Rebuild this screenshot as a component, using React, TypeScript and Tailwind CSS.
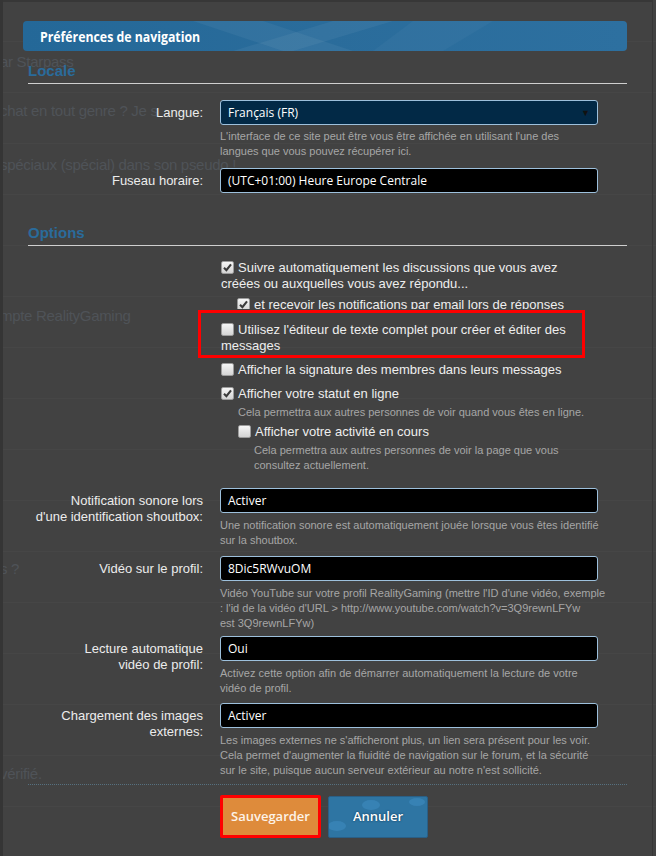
import React from "react";

const Box = ({ checked }: { checked?: boolean }) => (
  <span className="relative inline-block w-[13px] h-[13px] align-[-2px] mr-[4px] rounded-[2px] border border-[#9c9c9c] bg-gradient-to-b from-[#f6f6f6] to-[#d4d4d4]">
    {checked && (
      <svg viewBox="0 0 13 13" className="absolute left-[-1px] top-[-1px] w-[13px] h-[13px]">
        <path d="M3 6.8 L5.4 9.2 L10 3.4" fill="none" stroke="#3a3a3a" strokeWidth="2.1" />
      </svg>
    )}
  </span>
);

const Input = ({ value, select }: { value: string; select?: boolean }) => (
  <div
    className={`relative h-[25px] w-[378px] rounded-[3px] border border-[#9dc0dc] flex items-center pl-[7px] text-[12px] text-white ${
      select ? "bg-[#022946]" : "bg-black"
    }`}
    style={{ fontFamily: '"Open Sans", sans-serif' }}
  >
    {value}
    {select && <span className="absolute right-[7px] top-[5px] text-[9px] text-[#111]">▼</span>}
  </div>
);

const Expl = ({ children, className = "" }: { children: React.ReactNode; className?: string }) => (
  <div className={`text-[11px] leading-[15px] text-[#a6a6a6] ${className}`}>{children}</div>
);

const Row = ({
  label,
  value,
  select,
  expl,
  explMt = "mt-[5px]",
  className = "",
}: {
  label: React.ReactNode;
  value: string;
  select?: boolean;
  expl?: React.ReactNode;
  explMt?: string;
  className?: string;
}) => (
  <div className={`flex ${className}`}>
    <div className="w-[180px] text-right pt-[5px] text-[13px] leading-[16px] text-[#ececec] whitespace-nowrap">{label}</div>
    <div className="ml-[17px] w-[380px]">
      <Input value={value} select={select} />
      {expl && <Expl className={`${explMt} whitespace-nowrap`}>{expl}</Expl>}
    </div>
  </div>
);

export default function App() {
  const lines = [41, 92, 143, 194, 245, 296, 347, 398, 449, 500, 551, 602, 653, 704, 755, 806];
  return (
    <div
      className="relative w-[656px] h-[856px] overflow-hidden bg-[#424242]"
      style={{ fontFamily: '"Liberation Sans", Arial, sans-serif' }}
    >
      {/* page behind the dialog */}
      <div className="absolute inset-0 z-0 text-[15px] tracking-[-0.3px] text-[#4f5358]">
        {lines.map((y) => (
          <div key={y} className="absolute left-0 right-0 h-px bg-[#464646]" style={{ top: y }} />
        ))}
        <div className="absolute left-0 top-[51px] whitespace-nowrap">ar Starpass</div>
        <div className="absolute left-0 top-[100px] whitespace-nowrap">chat en tout genre ? Je s</div>
        <div className="absolute left-0 top-[154px] whitespace-nowrap">spéciaux (spécial) dans son pseudo !</div>
        <div className="absolute left-0 top-[305px] whitespace-nowrap">mpte RealityGaming</div>
        <div className="absolute left-0 top-[558px] whitespace-nowrap">s ?</div>
        <div className="absolute left-0 top-[763px] whitespace-nowrap">vérifié.</div>
      </div>

      {/* frame */}
      <div className="absolute left-0 top-0 bottom-0 w-[3px] bg-[#353535] z-10" />
      <div className="relative z-10 ml-[3px] w-[650px] h-[856px] border-t-2 border-r border-[#373737]">
        <div className="pt-[19px] pl-[20px]">
          {/* header */}
          <div className="relative h-[30px] w-[604px] rounded-[4px] overflow-hidden bg-gradient-to-r from-[#246898] via-[#2a6c9b] to-[#2d70a0] flex items-center pl-[17px]">
            <svg className="absolute inset-0" width="604" height="30" viewBox="0 0 604 30">
              <polygon points="170,0 240,0 330,30 260,30" fill="#ffffff" opacity="0.05" />
              <polygon points="310,0 370,0 270,30 210,30" fill="#ffffff" opacity="0.05" />
              <polygon points="390,0 470,0 420,30 350,30" fill="#ffffff" opacity="0.03" />
            </svg>
            <span
              className="relative inline-block origin-left scale-x-[0.82] text-[15px] font-bold text-white whitespace-nowrap"
              style={{ fontFamily: '"Open Sans", sans-serif' }}
            >
              Préférences de navigation
            </span>
          </div>

          {/* Locale */}
          <div className="mt-[11px] ml-[5px] w-[599px] pb-[3px] border-b border-[#cfcfcf] text-[15px] leading-[18px] font-bold text-[#2a6b9b]">
            Locale
          </div>

          <Row
            className="mt-[16px]"
            label="Langue:"
            value="Français (FR)"
            select
            explMt="mt-[4px]"
            expl={
              <>
                L'interface de ce site peut être vous être affichée en utilisant l'une des
                <br />
                langues que vous pouvez récupérer ici.
              </>
            }
          />
          <Row className="mt-[9px]" label="Fuseau horaire:" value="(UTC+01:00) Heure Europe Centrale" />

          {/* Options */}
          <div className="mt-[31px] ml-[5px] w-[599px] pb-[3px] border-b border-[#cfcfcf] text-[15px] leading-[18px] font-bold text-[#2a6b9b]">
            Options
          </div>

          <div className="mt-[14px] ml-[198px] w-[370px] text-[13px] leading-[16px] text-[#eeeeee]">
            <div>
              <Box checked />
              Suivre automatiquement les discussions que vous avez créées ou auxquelles vous avez répondu...
            </div>
            <div className="mt-[5px] ml-[16px] h-[12px] overflow-hidden whitespace-nowrap">
              <Box checked />
              et recevoir les notifications par email lors de réponses
            </div>
            <div className="mt-[1px] ml-[-23px] w-[387px] border-[3px] border-[#ff0000] pt-[9px] pl-[20px] pb-[1px]">
              <Box />
              Utilisez l'éditeur de texte complet pour créer et éditer des messages
            </div>
            <div className="mt-[4px] whitespace-nowrap">
              <Box />
              Afficher la signature des membres dans leurs messages
            </div>
            <div className="mt-[8px]">
              <Box checked />
              Afficher votre statut en ligne
            </div>
            <Expl className="mt-[3px] ml-[17px] whitespace-nowrap">
              Cela permettra aux autres personnes de voir quand vous êtes en ligne.
            </Expl>
            <div className="mt-[4px] ml-[17px]">
              <Box />
              Afficher votre activité en cours
            </div>
            <Expl className="mt-[3px] ml-[33px] w-[320px]">
              Cela permettra aux autres personnes de voir la page que vous consultez actuellement.
            </Expl>
          </div>

          <Row
            className="mt-[15px]"
            label={
              <>
                Notification sonore lors
                <br />
                d'une identification shoutbox:
              </>
            }
            value="Activer"
            expl={
              <>
                Une notification sonore est automatiquement jouée lorsque vous êtes identifié
                <br />
                sur la shoutbox.
              </>
            }
          />
          <Row
            className="mt-[8px]"
            label="Vidéo sur le profil:"
            value="8Dic5RWvuOM"
            expl={
              <>
                Vidéo YouTube sur votre profil RealityGaming (mettre l'ID d'une vidéo, exemple
                <br />: l'id de la vidéo d'URL &gt; http://www.youtube.com/watch?v=3Q9rewnLFYw
                <br />
                est 3Q9rewnLFYw)
              </>
            }
          />
          <Row
            className="mt-[5px]"
            label={
              <>
                Lecture automatique
                <br />
                vidéo de profil:
              </>
            }
            value="Oui"
            expl={
              <>
                Activez cette option afin de démarrer automatiquement la lecture de votre
                <br />
                vidéo de profil.
              </>
            }
          />
          <Row
            className="mt-[7px]"
            label={
              <>
                Chargement des images
                <br />
                externes:
              </>
            }
            value="Activer"
            expl={
              <>
                Les images externes ne s'afficheront plus, un lien sera présent pour les voir.
                <br />
                Cela permet d'augmenter la fluidité de navigation sur le forum, et la sécurité
                <br />
                sur le site, puisque aucun serveur extérieur au notre n'est sollicité.
              </>
            }
          />

          <div className="mt-[6px] ml-[5px] w-[599px] border-t border-dotted border-[#56707f]" />

          <div className="mt-[10px] ml-[197px] flex items-start gap-[7px]" style={{ fontFamily: '"Open Sans", sans-serif' }}>
            <div className="w-[101px] h-[43px] rounded-[2px] border-[3px] border-[#ff0000] bg-[#de8b3b] flex items-center justify-center text-[13px] font-semibold text-[#fdf3e8]">
              Sauvegarder
            </div>
            <div className="relative mt-[1px] w-[100px] h-[42px] rounded-[2px] border border-[#2a5f86] bg-[#2e75a3] overflow-hidden flex items-center justify-center text-[13px] font-semibold text-white [text-shadow:0_0_2px_#0b2e48]">
              <svg className="absolute inset-0" width="100" height="42" viewBox="0 0 100 42">
                <ellipse cx="42" cy="8" rx="9" ry="5" fill="#3d8ac0" opacity="0.6" />
                <ellipse cx="88" cy="5" rx="8" ry="4" fill="#3d8ac0" opacity="0.6" />
                <ellipse cx="8" cy="29" rx="9" ry="5" fill="#3d8ac0" opacity="0.6" />
              </svg>
              <span className="relative">Annuler</span>
            </div>
          </div>
        </div>
      </div>
    </div>
  );
}
